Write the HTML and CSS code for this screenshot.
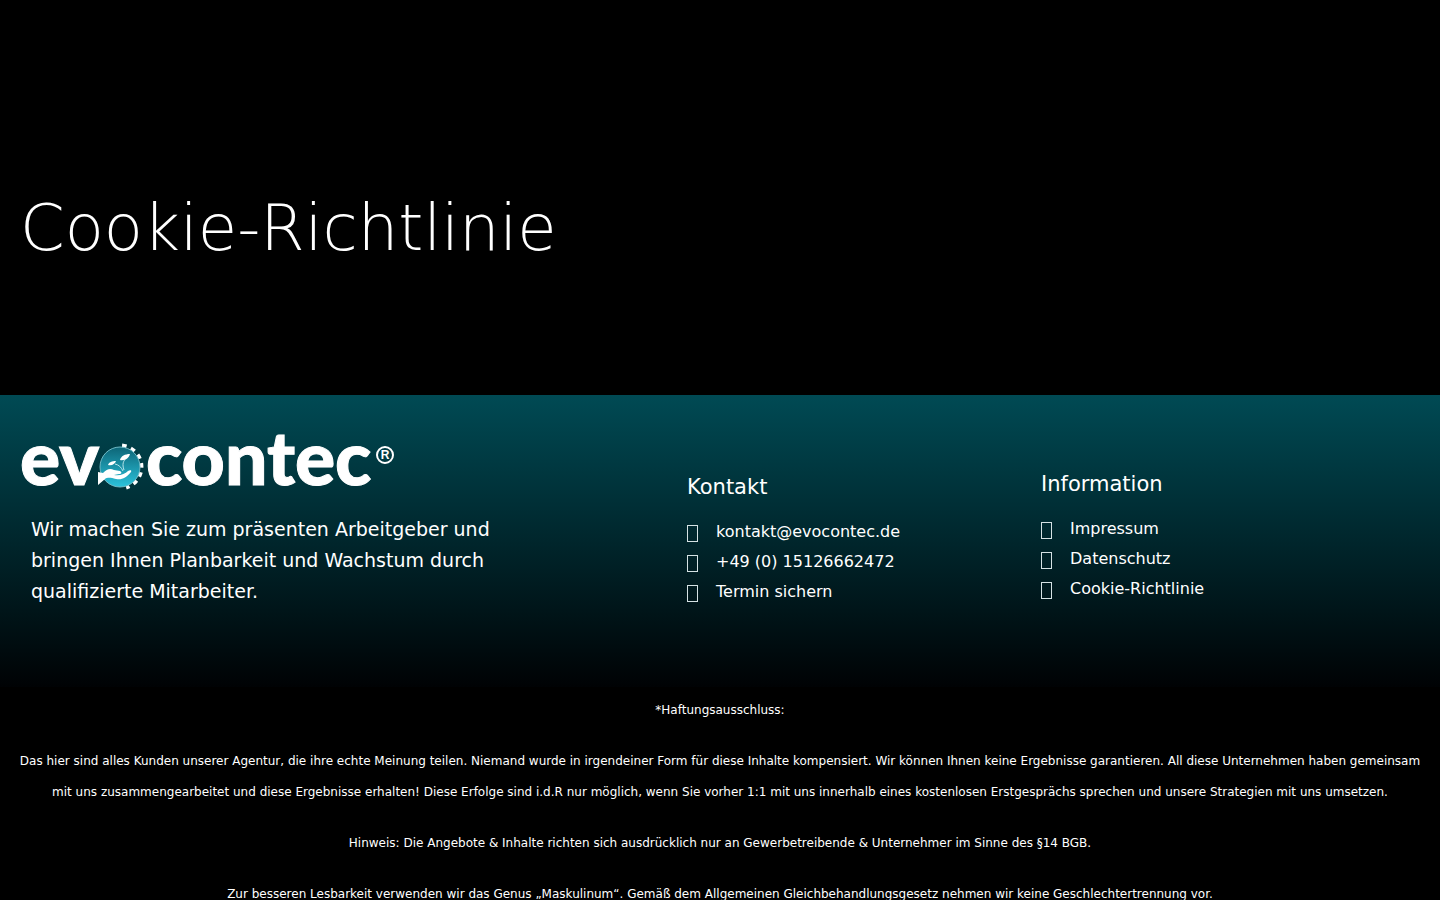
FILE: index.html
```html
<!DOCTYPE html>
<html lang="de">
<head>
    <meta charset="UTF-8">
    <meta name="viewport" content="width=device-width, initial-scale=1.0">
    <title>Cookie-Richtlinie</title>
    <link rel="stylesheet" href="styles.css">
</head>
<body>

    <header class="hero">
        <h1>Cookie-Richtlinie</h1>
    </header>

    <footer>
        <div class="footer-main">
            <div class="footer-about">
                <svg class="logo" width="380" height="100" viewBox="-2 -20 380 100" role="img" aria-label="evocontec">
                    <defs>
                        <linearGradient id="globe" x1="0" y1="0" x2="0" y2="1">
                            <stop offset="0" stop-color="#0d6577"/>
                            <stop offset="1" stop-color="#2bc3dc"/>
                        </linearGradient>
                    </defs>
                    <g class="logo-text">
                        <text x="-2" y="55">ev</text>
                        <text x="124" y="55">contec</text>
                    </g>
                    <!-- gear teeth on the right side -->
                    <path d="M100 16.100A21 21 0 0 1 104 57.100" fill="none" stroke="#fff" stroke-width="5" stroke-dasharray="4.500 4.500"/>
                    <circle cx="98" cy="37" r="20" fill="url(#globe)" stroke="#6fb9c5" stroke-width="1"/>
                    <!-- hand with plant -->
                    <path d="M76 42l5 1c4-4 7-5 11-3l6 1c2 1 2 3-1 3l-5 1c6 1 11-1 14-4 2-1 4-1 3 1-5 6-9 8-15 7-5-1-8-2-11 0l-7 6z" fill="#fff"/>
                    <path d="M93 34c4 1 6 3 8 7M102 40c-2-6-1-9 3-13" fill="none" stroke="#b8e4ea" stroke-width="1"/>
                    <path d="M86 35c1-3 4-4 8-4-1 3-4 5-8 4zM98 30c1-4 5-6 10-6-1 4-5 7-10 6z" fill="#fff"/>
                    <circle cx="363" cy="25" r="8" fill="none" stroke="#fff" stroke-width="2"/>
                    <text class="logo-mark" x="363" y="29" text-anchor="middle">R</text>
                </svg>
                <p>Wir machen Sie zum präsenten Arbeitgeber und bringen Ihnen Planbarkeit und Wachstum durch qualifizierte Mitarbeiter.</p>
            </div>

            <div class="footer-col footer-contact">
                <h2>Kontakt</h2>
                <ul>
                    <li><a href="mailto:kontakt@evocontec.de"><span class="icon"></span>kontakt@evocontec.de</a></li>
                    <li><a href="tel:+4915126662472"><span class="icon"></span>+49 (0) 15126662472</a></li>
                    <li><a href="#"><span class="icon"></span>Termin sichern</a></li>
                </ul>
            </div>

            <div class="footer-col">
                <h2>Information</h2>
                <ul>
                    <li><a href="#"><span class="icon"></span>Impressum</a></li>
                    <li><a href="#"><span class="icon"></span>Datenschutz</a></li>
                    <li><a href="#"><span class="icon"></span>Cookie-Richtlinie</a></li>
                </ul>
            </div>
        </div>

        <div class="disclaimer">
            <p>*Haftungsausschluss:</p>
            <p>Das hier sind alles Kunden unserer Agentur, die ihre echte Meinung teilen. Niemand wurde in irgendeiner Form für diese Inhalte kompensiert. Wir können Ihnen keine Ergebnisse garantieren. All diese Unternehmen haben gemeinsam mit uns zusammengearbeitet und diese Ergebnisse erhalten! Diese Erfolge sind i.d.R nur möglich, wenn Sie vorher 1:1 mit uns innerhalb eines kostenlosen Erstgesprächs sprechen und unsere Strategien mit uns umsetzen.</p>
            <p>Hinweis: Die Angebote &amp; Inhalte richten sich ausdrücklich nur an Gewerbetreibende &amp; Unternehmer im Sinne des §14 BGB.</p>
            <p>Zur besseren Lesbarkeit verwenden wir das Genus „Maskulinum“. Gemäß dem Allgemeinen Gleichbehandlungsgesetz nehmen wir keine Geschlechtertrennung vor.</p>
        </div>
    </footer>

</body>
</html>
```

FILE: styles.css
```css
* {
    box-sizing: border-box;
}
html {
    scrollbar-width: none;
}
body {
    margin: 0;
    background-color: #000;
    color: #fff;
    font-family: "DejaVu Sans", sans-serif;
}
h1, h2, p, ul {
    margin: 0;
    padding: 0;
    font-weight: normal;
}
.hero {
    padding: 190px 20px 129px;
}
.hero h1 {
    font-size: 64px;
    font-weight: 200;
    line-height: 76px;
}
.footer-main {
    display: grid;
    grid-template-columns: 667fr 354fr 379fr;
    padding: 15px 20px 80px;
    background: linear-gradient(#004a54, #000204);
}
.logo {
    display: block;
    overflow: visible;
}
.logo-text {
    fill: #fff;
    stroke: #fff;
    stroke-width: 1px;
    font-family: Lato, sans-serif;
    font-size: 75px;
    font-weight: 900;
}
.logo-mark {
    fill: #fff;
    font-family: "Liberation Sans", sans-serif;
    font-size: 12px;
    font-weight: bold;
}
.footer-about p {
    max-width: 500px;
    margin-top: 4px;
    padding-left: 11px;
    font-size: 19px;
    line-height: 31px;
}
.footer-col {
    padding-top: 60px;
}
.footer-contact {
    padding-top: 63px;
}
.footer-col h2 {
    font-size: 21px;
    line-height: 28px;
}
.footer-col ul {
    margin-top: 16px;
    list-style: none;
}
.footer-col a {
    display: flex;
    align-items: center;
    gap: 18px;
    color: #fff;
    font-size: 16px;
    line-height: 30px;
    text-decoration: none;
}
.icon {
    width: 11px;
    height: 17px;
    margin-top: 2px;
    border: 1px solid #d5e2e4;
}
.disclaimer {
    padding: 8px 10px;
    font-size: 12px;
    line-height: 31px;
    text-align: center;
}
.disclaimer p {
    margin-bottom: 20px;
}
```
